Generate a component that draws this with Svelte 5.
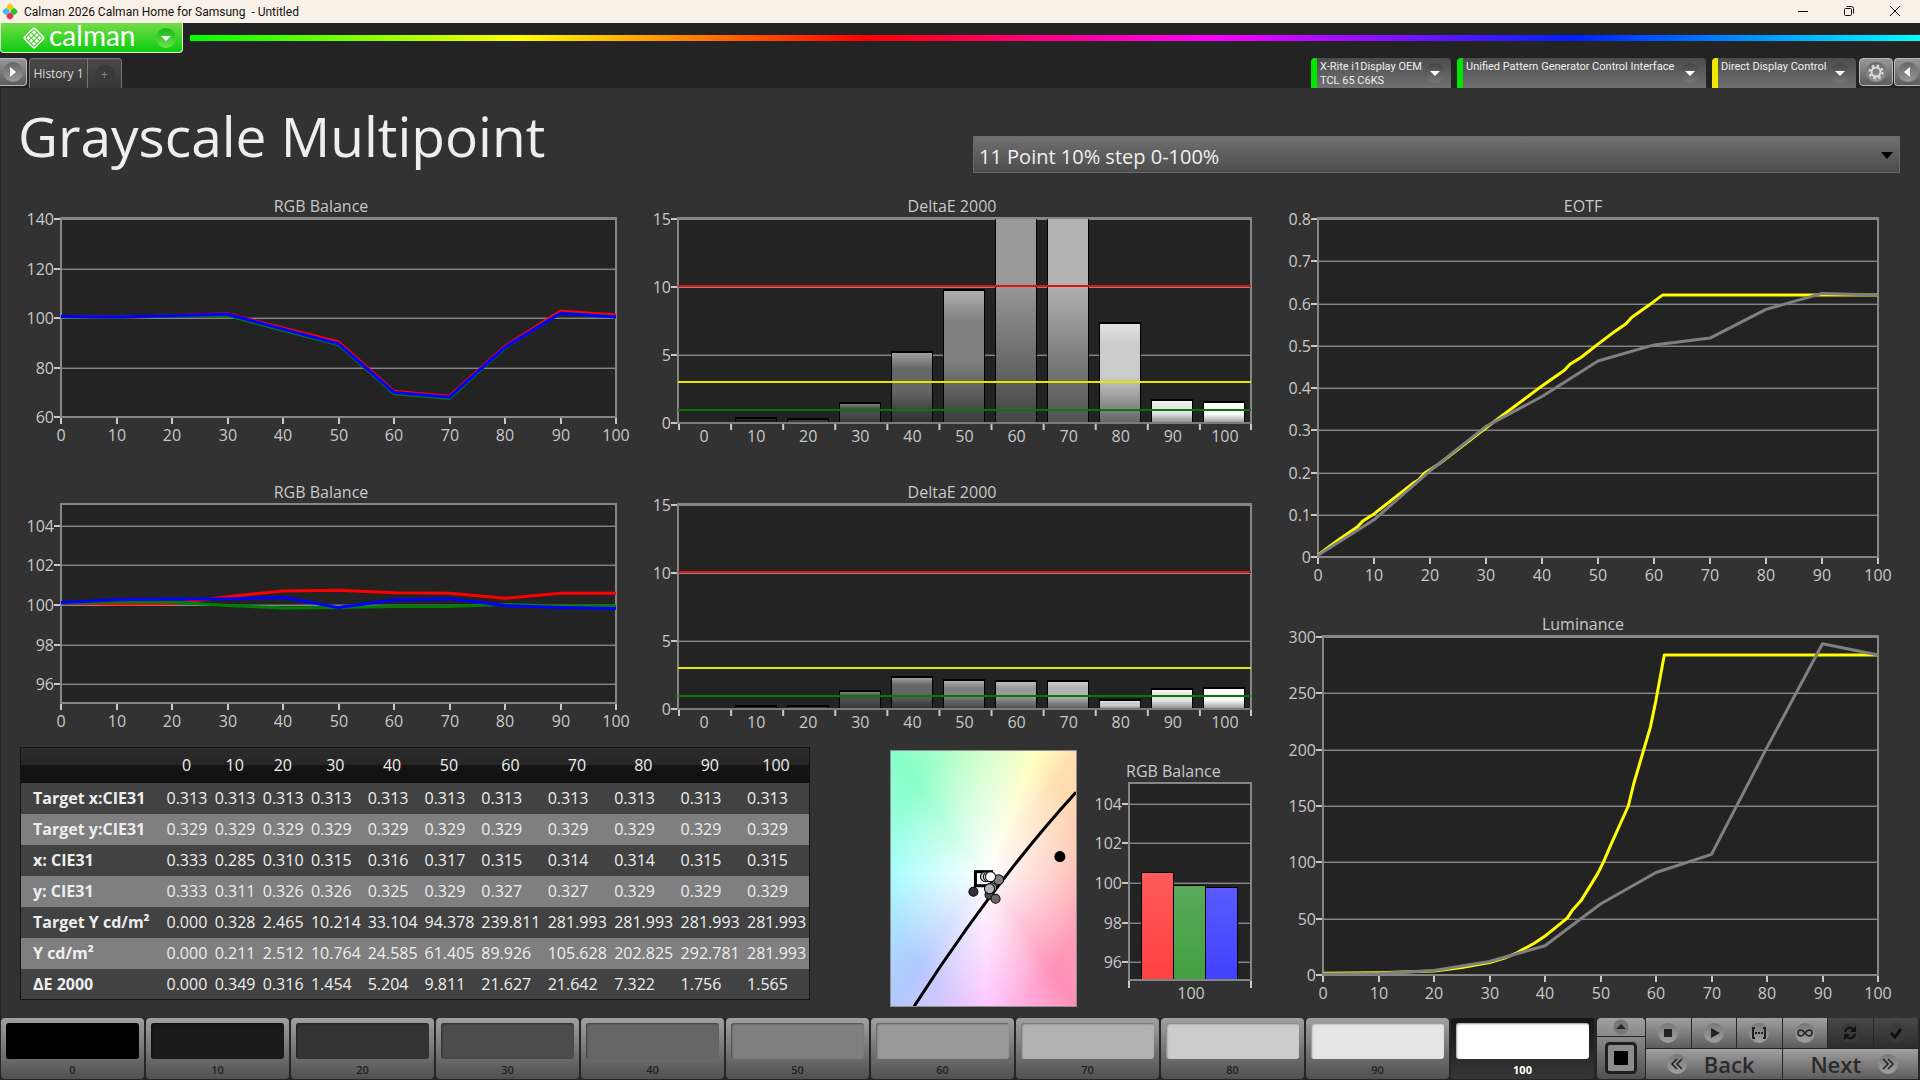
<script lang="ts">
  const steps = [0, 10, 20, 30, 40, 50, 60, 70, 80, 90, 100];
  const FRAME = '#868686';

  type Pt = [number, number];
  type Axis = { left: number; right: number; top: number; bottom: number; yMin: number; yMax: number; yTop: number; yBase: number; ticks: number[] };
  type LineChart = Axis & { title: string; titleX: number; w: number; h: number; series: { color: string; points: Pt[] }[] };
  type BarChart = Axis & { title: string; titleX: number; w: number; h: number; values: number[] };

  const zip = (values: number[]): Pt[] => values.map((v, i) => [i * 10, v]);

  const balanceBefore: LineChart = {
    title: 'RGB Balance', titleX: 321, w: 640, h: 270,
    left: 61, right: 616, top: 28, bottom: 227, yMin: 60, yMax: 140, yTop: 29, yBase: 227,
    ticks: [60, 80, 100, 120, 140],
    series: [
      { color: '#ff0000', points: zip([100.6, 100.2, 100.9, 101.7, 96, 90.4, 70.4, 68.4, 88.6, 102.8, 101.2]) },
      { color: '#008000', points: zip([100.5, 100.3, 100.7, 101, 95, 89.2, 69.4, 67.5, 88, 102, 100.4]) },
      { color: '#0000ff', points: zip([100.6, 100.4, 100.9, 101.5, 95.5, 89.6, 69.9, 68, 88.2, 101.9, 100.4]) }
    ]
  };

  const balanceAfter: LineChart = {
    title: 'RGB Balance', titleX: 321, w: 640, h: 270,
    left: 61, right: 616, top: 28, bottom: 227, yMin: 95, yMax: 105, yTop: 30, yBase: 228,
    ticks: [96, 98, 100, 102, 104],
    series: [
      { color: '#ff0000', points: zip([100.12, 100.05, 100.08, 100.42, 100.7, 100.75, 100.62, 100.59, 100.34, 100.59, 100.59]) },
      { color: '#008000', points: zip([100.12, 100.15, 100.15, 99.98, 99.85, 99.88, 99.92, 99.92, 100.03, 99.95, 99.95]) },
      { color: '#0000ff', points: zip([100.12, 100.27, 100.3, 100.3, 100.39, 99.87, 100.25, 100.32, 99.97, 99.88, 99.82]) }
    ]
  };

  const eotf: LineChart = {
    title: 'EOTF', titleX: 313, w: 650, h: 416,
    left: 48, right: 608, top: 28, bottom: 367, yMin: 0, yMax: 0.8, yTop: 29, yBase: 367,
    ticks: [0, 0.1, 0.2, 0.3, 0.4, 0.5, 0.6, 0.7, 0.8],
    series: [
      { color: '#ffff00', points: [[0, 0.005], [4, 0.044], [7, 0.071], [8, 0.085], [10, 0.102], [17, 0.175], [18, 0.183], [19, 0.198], [22, 0.224], [30, 0.306], [40, 0.405], [41, 0.414], [44, 0.442], [45, 0.456], [47, 0.473], [50, 0.504], [53, 0.534], [55, 0.552], [56, 0.567], [59, 0.595], [61.5, 0.62], [100, 0.62]] },
      { color: '#808080', points: zip([0.004, 0.088, 0.204, 0.309, 0.38, 0.464, 0.502, 0.518, 0.586, 0.624, 0.62]) }
    ]
  };

  const luminance: LineChart = {
    title: 'Luminance', titleX: 313, w: 650, h: 412,
    left: 53, right: 608, top: 30, bottom: 369, yMin: 0, yMax: 300, yTop: 31, yBase: 369,
    ticks: [0, 50, 100, 150, 200, 250, 300],
    series: [
      { color: '#ffff00', points: [[0, 1.5], [10, 2], [20, 3.6], [25, 6.6], [30, 11], [33, 15.5], [35, 20], [38, 28], [40, 34.5], [44, 50.5], [45, 58], [46.5, 66], [48, 78], [49.5, 90], [50.5, 100], [52, 117], [55, 150], [56, 170], [59, 220], [60, 244], [61.5, 284], [100, 284]] },
      { color: '#808080', points: zip([1, 1.2, 4, 12, 26, 63, 91, 107, 202, 294, 284]) }
    ]
  };

  const deltaBase = {
    title: 'DeltaE 2000', titleX: 312, w: 630, h: 270,
    left: 38, right: 611, top: 28, bottom: 233, yMin: 0, yMax: 15, yTop: 29, yBase: 233,
    ticks: [0, 5, 10, 15]
  };
  const deltaBefore: BarChart = { ...deltaBase, values: [0, 0.349, 0.316, 1.454, 5.204, 9.811, 21.627, 21.642, 7.322, 1.656, 1.565] };
  const deltaAfter: BarChart = { ...deltaBase, values: [0, 0.25, 0.25, 1.35, 2.38, 2.15, 2.05, 2.05, 0.65, 1.48, 1.58] };

  const small: Axis = { left: 49, right: 171, top: 33, bottom: 230, yMin: 95, yMax: 105, yTop: 34, yBase: 232, ticks: [96, 98, 100, 102, 104] };
  const smallBars = [
    { id: 'r', value: 100.55, from: '#ff5a5a', to: '#ff4040' },
    { id: 'g', value: 99.92, from: '#5aaa5a', to: '#40a040' },
    { id: 'b', value: 99.78, from: '#5a5aff', to: '#4040ff' }
  ];

  const barShades = [
    ['#000', '#000', '#000'], ['#303030', '#1c1c1c', '#101010'], ['#484848', '#333', '#181818'],
    ['#848484', '#4c4c4c', '#303030'], ['#a0a0a0', '#666', '#2c2c2c'], ['#b0b0b0', '#808080', '#3a3a3a'],
    ['#bebebe', '#999', '#444'], ['#cacaca', '#b2b2b2', '#505050'], ['#e0e0e0', '#ccc', '#606060'],
    ['#f4f4f4', '#e5e5e5', '#7c7c7c'], ['#fff', '#fff', '#888']
  ];

  const yPos = (c: Axis, v: number) => c.yBase - ((v - c.yMin) / (c.yMax - c.yMin)) * (c.yBase - c.yTop);
  const xPos = (c: Axis, v: number) => c.left + (v / 100) * (c.right - c.left);
  const path = (c: Axis, pts: Pt[]) => pts.map(([x, y]) => `${xPos(c, x).toFixed(1)},${yPos(c, y).toFixed(1)}`).join(' ');
  const slot = (c: Axis) => (c.right - c.left) / steps.length;

  const rows = [
    { label: 'Target x:CIE31', cells: Array(11).fill('0.313') },
    { label: 'Target y:CIE31', cells: Array(11).fill('0.329') },
    { label: 'x: CIE31', cells: ['0.333', '0.285', '0.310', '0.315', '0.316', '0.317', '0.315', '0.314', '0.314', '0.315', '0.315'] },
    { label: 'y: CIE31', cells: ['0.333', '0.311', '0.326', '0.326', '0.325', '0.329', '0.327', '0.327', '0.329', '0.329', '0.329'] },
    { label: 'Target Y cd/m²', cells: ['0.000', '0.328', '2.465', '10.214', '33.104', '94.378', '239.811', '281.993', '281.993', '281.993', '281.993'] },
    { label: 'Y cd/m²', cells: ['0.000', '0.211', '2.512', '10.764', '24.585', '61.405', '89.926', '105.628', '202.825', '292.781', '281.993'] },
    { label: 'ΔE 2000', cells: ['0.000', '0.349', '0.316', '1.454', '5.204', '9.811', '21.627', '21.642', '7.322', '1.756', '1.565'] }
  ];

  const swatches = ['#000', '#1a1a1a', '#333', '#4c4c4c', '#666', '#7f7f7f', '#999', '#b2b2b2', '#ccc', '#e5e5e5', '#fff'];

  const devices = [
    { id: 'meter', lines: ['X-Rite i1Display OEM', 'TCL 65 C6KS'] },
    { id: 'source', lines: ['Unified Pattern Generator Control Interface'] },
    { id: 'display', lines: ['Direct Display Control'] }
  ];

  let selected = $state(100);
  let pointSet = $state('11 Point 10% step 0-100%');
</script>

{#snippet grid(c: Axis)}
  <rect x={c.left} y={c.top} width={c.right - c.left} height={c.bottom - c.top} fill="#232323" />
  {#each c.ticks as t}
    {@const y = Math.round(yPos(c, t))}
    <rect x={c.left} y={y - 1} width={c.right - c.left} height="1" fill="#4c4c4c" />
    <rect x={c.left} {y} width={c.right - c.left} height="1" fill={FRAME} />
    <rect x={c.left - 7} y={y - 1} width="7" height="2" fill="#c8c8c8" />
    <text class="axis" x={c.left - 7} y={y + 6} text-anchor="end">{t}</text>
  {/each}
{/snippet}

{#snippet frame(c: Axis)}
  <rect x={c.left} y={c.top} width={c.right - c.left} height={c.bottom - c.top} fill="none" stroke={FRAME} stroke-width="2" />
{/snippet}

{#snippet lineChart(c: LineChart)}
  <svg class="chart" viewBox="0 0 {c.w} {c.h}" role="img" aria-label={c.title}>
    <text class="axis" x={c.titleX} y={c.top - 6} text-anchor="middle">{c.title}</text>
    {@render grid(c)}
    {@render frame(c)}
    {#each steps as s}
      {@const x = Math.round(xPos(c, s))}
      <rect x={x - 1} y={c.bottom + 1} width="2" height="6" fill="#c8c8c8" />
      <text class="axis" {x} y={c.bottom + 24} text-anchor="middle">{s}</text>
    {/each}
    {#each c.series as s}
      <polyline points={path(c, s.points)} fill="none" stroke={s.color} stroke-width="3" stroke-linejoin="round" />
    {/each}
  </svg>
{/snippet}

{#snippet barChart(c: BarChart, id: string)}
  <svg class="chart" viewBox="0 0 {c.w} {c.h}" role="img" aria-label={c.title}>
    <defs>
      <clipPath id="{id}-clip"><rect x={c.left} y={c.top + 1} width={c.right - c.left} height={c.bottom - c.top} /></clipPath>
      {#each barShades as [light, mid, dark], i}
        <linearGradient id="{id}-{i}" x1="0" y1="0" x2="0" y2="1">
          <stop offset="0" stop-color={light} />
          <stop offset="0.22" stop-color={mid} />
          <stop offset="0.52" stop-color={mid} />
          <stop offset="1" stop-color={dark} />
        </linearGradient>
      {/each}
    </defs>
    <text class="axis" x={c.titleX} y={c.top - 6} text-anchor="middle">{c.title}</text>
    {@render grid(c)}
    {@render frame(c)}
    <g clip-path="url(#{id}-clip)">
      {#each c.values as v, i}
        {#if v > 0}
          {@const x = Math.floor(c.left + slot(c) * (i + 0.5)) - 21}
          {@const y = Math.round(yPos(c, v)) - 1}
          <rect {x} {y} width="42" height={c.bottom - y} fill="#000" />
          <rect x={x + 1} y={y + 2} width="40" height={c.bottom - y - 1} fill="url(#{id}-{i})" />
        {/if}
      {/each}
    </g>
    <rect x={c.left} y={c.bottom - 1} width={c.right - c.left} height="2" fill="#7c7c7c" />
    <rect x={c.left} y="95" width={c.right - c.left} height="2" fill="#dd1414" />
    <rect x={c.left} y="191" width={c.right - c.left} height="2" fill="#e6e600" />
    <rect x={c.left} y="219" width={c.right - c.left} height="2" fill="#067806" />
    {#each steps as s, i}
      <rect x={c.left + slot(c) * i} y={c.bottom + 1} width="2" height="6" fill="#c8c8c8" />
      <text class="axis" x={c.left + slot(c) * (i + 0.5)} y={c.bottom + 19} text-anchor="middle">{s}</text>
    {/each}
    <rect x={c.right - 1} y={c.bottom + 1} width="2" height="6" fill="#c8c8c8" />
  </svg>
{/snippet}

{#snippet roundArrow(dir: string)}
  <span class="round {dir}">
    <svg viewBox="0 0 20 20" width="20" height="20" aria-hidden="true">
      {#if dir === 'down'}<path d="M5 8h10l-5 5z" fill="#fff" />{/if}
      {#if dir === 'right'}<path d="M7 5l6 5-6 5z" fill="#fff" />{/if}
      {#if dir === 'left'}<path d="M12 5l-6 5 6 5z" fill="#fff" />{/if}
    </svg>
  </span>
{/snippet}

<div class="app">
  <div class="titlebar">
    <svg width="16" height="17" viewBox="0 0 16 17" aria-hidden="true">
      <rect x="5" y="1" width="6" height="6" rx="2" transform="rotate(45 8 4)" fill="#f5c518" />
      <rect x="1" y="5.500" width="6" height="6" rx="2" transform="rotate(45 4 8.500)" fill="#3fc1ee" />
      <rect x="9" y="5.500" width="6" height="6" rx="2" transform="rotate(45 12 8.500)" fill="#1ecb2c" />
      <rect x="5" y="10" width="6" height="6" rx="2" transform="rotate(45 8 13)" fill="#f0285a" />
    </svg>
    <span class="caption">Calman 2026 Calman Home for Samsung&nbsp; - Untitled</span>
    <div class="window-buttons">
      <button aria-label="Minimize"><svg width="12" height="12" viewBox="0 0 12 12"><path d="M1 6.500h10" stroke="#111" /></svg></button>
      <button aria-label="Restore"><svg width="12" height="12" viewBox="0 0 12 12" fill="none" stroke="#111"><rect x="1.500" y="3.500" width="7" height="7" rx="1" /><path d="M3.500 1.500h5a2 2 0 0 1 2 2v5" /></svg></button>
      <button aria-label="Close"><svg width="12" height="12" viewBox="0 0 12 12"><path d="M1 1l10 10M11 1L1 11" stroke="#111" /></svg></button>
    </div>
  </div>

  <header>
    <div class="brand-row">
      <button class="brand" aria-label="Calman menu">
        <svg width="24" height="24" viewBox="0 0 24 24" aria-hidden="true">
          <rect x="4" y="4" width="16" height="16" rx="2" transform="rotate(45 12 12)" fill="#fff" />
          <g transform="rotate(45 12 12)" fill="none" stroke="#3fd02a">
            <rect x="6" y="6" width="12" height="12" rx="1" />
            <path d="M10 6v12M14 6v12M6 10h12M6 14h12" />
          </g>
        </svg>
        <span class="brand-name">calman</span>
        {@render roundArrow('down')}
      </button>
      <div class="rainbow"></div>
    </div>

    <div class="tab-row">
      <button class="square first" aria-label="Expand">{@render roundArrow('right')}</button>
      <div class="tabs">
        <button class="tab">History 1</button>
        <button class="tab add" aria-label="Add history"><span>+</span></button>
      </div>
      <div class="devices">
        {#each devices as d}
          <button class="device {d.id}">
            <span class="device-text">
              {#each d.lines as line}<span>{line}</span>{/each}
            </span>
            {@render roundArrow('down')}
          </button>
        {/each}
      </div>
      <button class="square" aria-label="Settings">
        <span class="round">
          <svg viewBox="0 0 20 20" width="20" height="20" fill="none" stroke="#ddd">
            <circle cx="10" cy="10" r="4.500" stroke-width="2" />
            <circle cx="10" cy="10" r="6.500" stroke-width="2" stroke-dasharray="2.500 2.600" />
          </svg>
        </span>
      </button>
      <button class="square last" aria-label="Collapse">{@render roundArrow('left')}</button>
    </div>
  </header>

  <main>
    <div class="heading">
      <h1>Grayscale Multipoint</h1>
      <div class="select-wrap">
        <select bind:value={pointSet} aria-label="Point set">
          <option>11 Point 10% step 0-100%</option>
          <option>21 Point 5% step 0-100%</option>
        </select>
        <svg width="12" height="7" viewBox="0 0 12 7" aria-hidden="true"><path d="M0 0h12L6 7z" fill="#000" /></svg>
      </div>
    </div>

    <div class="dashboard">
      <div class="left">
        <div class="pair">
          {@render lineChart(balanceBefore)}
          {@render barChart(deltaBefore, 'before')}
          {@render lineChart(balanceAfter)}
          {@render barChart(deltaAfter, 'after')}
        </div>

        <div class="lower">
          <table>
            <colgroup>
              <col class="c-label" /><col class="c-s" /><col class="c-s" /><col class="c-s" />
              <col class="c-m" /><col class="c-m" /><col class="c-m" />
              <col /><col /><col /><col /><col />
            </colgroup>
            <thead>
              <tr>
                <th></th>
                {#each steps as s}<th>{s}</th>{/each}
              </tr>
            </thead>
            <tbody>
              {#each rows as row}
                <tr>
                  <th scope="row">{row.label}</th>
                  {#each row.cells as cell}<td>{cell}</td>{/each}
                </tr>
              {/each}
            </tbody>
          </table>

          <div class="cie">
            <svg viewBox="0 0 184 254" role="img" aria-label="CIE chart">
              <path d="M23 254Q102 131 184 41" fill="none" stroke="#000" stroke-width="3" />
              <rect x="84" y="120" width="16" height="14" fill="#fff" stroke="#000" stroke-width="3" />
              <g stroke="#000" stroke-width="1">
                <circle cx="168" cy="105" r="5" fill="#000" />
                <circle cx="82" cy="140" r="4.500" fill="#333" />
                <circle cx="98" cy="143" r="4.500" fill="#4c4c4c" />
                <circle cx="104" cy="147" r="4.500" fill="#666" />
                <circle cx="107" cy="128" r="5" fill="#7f7f7f" />
                <circle cx="100" cy="136" r="5" fill="#999" />
                <circle cx="98" cy="137" r="5" fill="#b2b2b2" />
                <circle cx="94" cy="125" r="5" fill="#ccc" />
                <circle cx="97" cy="125" r="5" fill="#e5e5e5" />
                <circle cx="99" cy="125" r="5" fill="#fff" />
              </g>
            </svg>
          </div>

          <svg class="small-chart" viewBox="0 0 190 262" role="img" aria-label="RGB Balance">
            <defs>
              {#each smallBars as b}
                <linearGradient id="small-{b.id}" x1="0" y1="0" x2="0" y2="1">
                  <stop offset="0" stop-color={b.from} /><stop offset="1" stop-color={b.to} />
                </linearGradient>
              {/each}
            </defs>
            <text class="axis" x="46" y="27">RGB Balance</text>
            {@render grid(small)}
            {#each smallBars as b, i}
              {@const y = Math.round(yPos(small, b.value))}
              <rect x={61 + i * 32} {y} width="33" height={small.bottom - y + 1} fill="#000" />
              <rect x={62 + i * 32} y={y + 1} width="31" height={small.bottom - y} fill="url(#small-{b.id})" />
            {/each}
            {@render frame(small)}
            <rect x={small.left - 1} y="231" width="2" height="7" fill="#c8c8c8" />
            <rect x={small.right - 1} y="231" width="2" height="7" fill="#c8c8c8" />
            <text class="axis" x="111" y="249" text-anchor="middle">100</text>
          </svg>
        </div>
      </div>

      <div class="right">
        {@render lineChart(eotf)}
        {@render lineChart(luminance)}
      </div>
    </div>
  </main>

  <footer>
    <div class="swatches">
      {#each steps as s, i}
        <button class="swatch" class:selected={selected === s} onclick={() => (selected = s)}>
          <span class="chip" style="background: {swatches[i]}"></span>
          <span class="level">{s}</span>
        </button>
      {/each}
    </div>

    <div class="pattern">
      <button class="up" aria-label="Show patterns">
        <svg width="16" height="16" viewBox="0 0 16 16"><circle cx="8" cy="8" r="7.500" fill="#777" /><path d="M3 10h10L8 5z" fill="#222" /></svg>
      </button>
      <button class="window" aria-label="Pattern window">
        <svg width="32" height="32" viewBox="0 0 32 32"><rect x="1.500" y="1.500" width="29" height="29" rx="3" fill="#8c8c8c" stroke="#1e1e1e" stroke-width="3" /><rect x="9" y="9" width="14" height="14" fill="#000" /></svg>
      </button>
    </div>

    <div class="transport">
      <button aria-label="Stop"><span class="disc"><svg viewBox="0 0 20 20"><rect x="6" y="6" width="8" height="8" /></svg></span></button>
      <button aria-label="Play"><span class="disc"><svg viewBox="0 0 20 20"><path d="M7 5l9 5-9 5z" /></svg></span></button>
      <button aria-label="Read series"><span class="disc"><svg viewBox="0 0 20 20"><path d="M6 5H4v10h2M14 5h2v10h-2M6 10h2M9 10h2M12 10h2" fill="none" stroke="#222" stroke-width="2" /></svg></span></button>
      <button aria-label="Read continuous"><span class="disc"><svg viewBox="0 0 20 20"><path d="M10 10C8 7.500 7 7 6 7a3 3 0 0 0 0 6c1 0 2-.5 4-3s3-3 4-3a3 3 0 0 1 0 6c-1 0-2-.5-4-3z" fill="none" stroke="#222" stroke-width="1.500" /></svg></span></button>
      <button class="off" aria-label="Refresh"><span class="disc"><svg viewBox="0 0 20 20"><path d="M5 9a5 5 0 0 1 9-2M15 11a5 5 0 0 1-9 2" fill="none" stroke="#111" stroke-width="2" /><path d="M16 3v6h-6zM4 17v-6h6z" fill="#111" /></svg></span></button>
      <button class="off" aria-label="Accept"><span class="disc"><svg viewBox="0 0 20 20"><path d="M5 10l4 4 6-8" fill="none" stroke="#111" stroke-width="3" /></svg></span></button>
      <button class="nav back"><span class="disc"><svg viewBox="0 0 20 20"><path d="M10 5l-5 5 5 5M15 5l-5 5 5 5" fill="none" stroke="#222" stroke-width="1.500" /></svg></span>Back</button>
      <button class="nav next">Next<span class="disc"><svg viewBox="0 0 20 20"><path d="M5 5l5 5-5 5M10 5l5 5-5 5" fill="none" stroke="#222" stroke-width="1.500" /></svg></span></button>
    </div>
  </footer>
</div>

<style>
  :global(body) { background: #323232; }
  .app {
    min-height: 100vh;
    display: flex;
    flex-direction: column;
    background: #323232;
    color: #eee;
    font-family: 'Open Sans', 'Noto Sans', sans-serif;
  }
  button {
    border: 0;
    padding: 0;
    margin: 0;
    background: none;
    font: inherit;
    color: inherit;
  }
  svg { display: block; }

  .titlebar {
    display: flex;
    align-items: center;
    height: 23px;
    padding: 0 19px 0 2px;
    background: #f9f1e7;
    color: #111;
    font-family: Roboto, sans-serif;
    font-size: 12px;
  }
  .caption { margin-left: 6px; }
  .window-buttons { margin-left: auto; display: flex; gap: 34px; padding-bottom: 2px; }

  header { background: #232323; height: 65px; }
  .brand-row { display: flex; align-items: flex-start; height: 35px; }
  .brand {
    display: flex;
    align-items: center;
    width: 183px;
    height: 30px;
    padding: 0 6px 0 21px;
    background: linear-gradient(#74dc48, #0ccc10);
    border: 1px solid #d8f5d0;
    border-top: 0;
    border-radius: 0 0 4px 4px;
  }
  .brand-name {
    flex: 1;
    margin-left: 3px;
    padding-bottom: 5px;
    text-align: left;
    font-family: Lato, sans-serif;
    font-size: 28px;
    line-height: 24px;
    color: #fff;
  }
  .brand .round { background: linear-gradient(#14b81a, #6fe04c); }
  .rainbow {
    flex: 1;
    height: 6px;
    margin: 12px 0 0 7px;
    background: linear-gradient(90deg, #00ff00, #ffff00 19%, #ff0000 39%, #ff00ff 59%, #0020ff 80%, #00ffff);
  }

  .round {
    flex: none;
    width: 20px;
    height: 20px;
    border-radius: 50%;
    background: linear-gradient(#444, #777);
  }
  .tab-row { display: flex; height: 30px; }
  .square {
    display: flex;
    align-items: center;
    justify-content: center;
    width: 34px;
    height: 28px;
    background: linear-gradient(#989898, #5c5c5c);
    border: 1px solid #b8b8b8;
    border-radius: 4px;
  }
  .square .round { background: linear-gradient(#666, #999); }
  .square.first { width: 27px; border-left: 0; border-radius: 0 4px 4px 0; }
  .square.last { width: 26px; border-right: 0; border-radius: 4px 0 0 4px; margin-left: 1px; }
  .tabs { display: flex; margin-left: 2px; }
  .tab {
    width: 59px;
    background: linear-gradient(#4a4a4a, #363636);
    border: 1px solid #777;
    border-bottom: 0;
    border-radius: 4px 0 0 0;
    font-size: 12px;
    color: #ddd;
  }
  .tab.add { width: 34px; border-left: 0; border-radius: 0 4px 0 0; color: #888; }
  .tab.add span {
    display: block;
    width: 20px;
    margin: 2px auto 0;
    line-height: 20px;
    border-radius: 50%;
    background: #3a3a3a;
  }
  .devices { display: flex; gap: 6px; margin: 0 3px 0 auto; }
  .device {
    display: flex;
    align-items: center;
    justify-content: space-between;
    padding: 0 6px 0 3px;
    background: linear-gradient(#4c4c4c, #707070);
    border-left: 6px solid #00e600;
    border-radius: 4px 4px 0 0;
    font-family: Roboto, sans-serif;
    font-size: 11px;
    line-height: 14px;
  }
  .device.meter { width: 140px; }
  .device.source { width: 249px; }
  .device.display { width: 144px; border-left-color: #f0e800; }
  .device-text {
    display: flex;
    flex-direction: column;
    align-self: flex-start;
    padding-top: 2px;
    text-align: left;
    white-space: nowrap;
  }

  main {
    flex: 1;
    box-shadow: inset 1px 0 #232323;
  }
  .heading {
    display: grid;
    grid-template-columns: 973fr 927fr;
    padding-right: 20px;
    height: 102px;
  }
  h1 {
    margin: 0;
    padding: 11px 0 0 18px;
    font-size: 55px;
    line-height: 74px;
    font-weight: 400;
    white-space: nowrap;
  }
  .select-wrap { position: relative; margin-top: 48px; }
  select {
    appearance: none;
    width: 100%;
    height: 37px;
    padding: 3px 5px 0;
    border: 1px solid #6a6a6a;
    border-radius: 0;
    background: linear-gradient(#707070, #4c4c4c);
    color: #f0f0f0;
    font: 20px 'Open Sans', sans-serif;
  }
  .select-wrap svg { position: absolute; right: 7px; top: 16px; }

  .dashboard { display: grid; grid-template-columns: 1270fr 650fr; }
  .pair { display: grid; grid-template-columns: 640fr 630fr; row-gap: 16px; }
  .chart { width: 100%; }
  .axis { font-family: 'Open Sans', 'Noto Sans', sans-serif; font-size: 16px; fill: #c8c8c8; }

  .lower {
    display: grid;
    grid-template-columns: 20fr 790fr 80fr 187fr 3fr 190fr;
    align-items: start;
    padding-top: 1px;
  }
  table {
    grid-column: 2;
    width: 100%;
    table-layout: fixed;
    border-collapse: collapse;
    border: 1px solid #141414;
    font-size: 16px;
    line-height: 20px;
  }
  .c-label { width: 18%; }
  .c-s { width: 6.1%; }
  .c-m { width: 7.2%; }
  thead tr { height: 35px; background: linear-gradient(#2c2c2c, #262626 50%, #141414 50%, #101010); }
  thead th { font-weight: 400; padding: 0; }
  tbody tr { height: 31px; background: #424242; }
  tbody tr:nth-child(even) { background: #7f7f7f; }
  tbody th { text-align: left; padding: 0 0 0 12px; white-space: nowrap; }
  td { padding: 0 0 0 4px; white-space: nowrap; }

  .cie {
    grid-column: 4;
    margin-top: 3px;
    border: 1px solid #909090;
    background:
      radial-gradient(ellipse farthest-side at 52% 48%, #fff, transparent),
      conic-gradient(from 0deg at 52% 48%, #d0ffc8, #ffffc0 22deg, #ffe0b0 36deg, #ffbcb4 90deg, #ff90b8 146deg, #ffc8ff 180deg, #b0c8ff 216deg, #a8ffff 270deg, #88ffc8 322deg, #d0ffc8);
  }
  .small-chart { grid-column: 6; margin-top: 3px; }

  footer {
    display: flex;
    gap: 3px;
    height: 62px;
    padding: 0 2px 1px 1px;
    background: #262626;
    box-sizing: border-box;
  }
  .swatches { flex: 1; display: flex; gap: 2px; }
  .swatch {
    flex: 1;
    display: flex;
    flex-direction: column;
    padding: 5px 5px 0;
    border-radius: 4px;
    background: linear-gradient(#a0a0a0, #505050);
    color: #1e1e1e;
    font-size: 11px;
    font-weight: 600;
    text-align: center;
  }
  .swatch.selected { background: linear-gradient(#161616, #363636); color: #fff; font-weight: 700; }
  .chip {
    height: 36px;
    border-radius: 3px;
    box-shadow: inset 1px 1px 2px rgba(0, 0, 0, 0.4);
  }
  .level { margin-top: 4px; line-height: 14px; }

  .pattern { width: 48px; display: flex; flex-direction: column; gap: 1px; }
  .pattern button {
    display: flex;
    align-items: center;
    justify-content: center;
  }
  .up { height: 18px; background: linear-gradient(#a0a0a0, #888); border-radius: 4px 4px 0 0; }
  .window { flex: 1; background: linear-gradient(#888, #505050); border-radius: 0 0 4px 4px; }

  .transport {
    width: 272px;
    margin-left: -2px;
    display: grid;
    grid-template-columns: repeat(6, 1fr);
    grid-template-rows: 1fr 1fr;
    gap: 1px;
  }
  .transport button {
    display: flex;
    align-items: center;
    justify-content: center;
    background: linear-gradient(#a0a0a0, #5c5c5c);
  }
  .transport svg { width: 20px; height: 20px; fill: #222; }
  .disc { border-radius: 50%; background: linear-gradient(#787878, #a0a0a0); }
  .transport .off { background: linear-gradient(#484848, #2c2c2c); }
  .off .disc { background: #3a3a3a; }
  .transport .nav {
    grid-column: span 3;
    gap: 17px;
    font-size: 22px;
    font-weight: 600;
    line-height: 28px;
    color: #2a2a2a;
  }
  .transport .back { padding-right: 6px; }
  .transport .next { padding-left: 8px; }
</style>
